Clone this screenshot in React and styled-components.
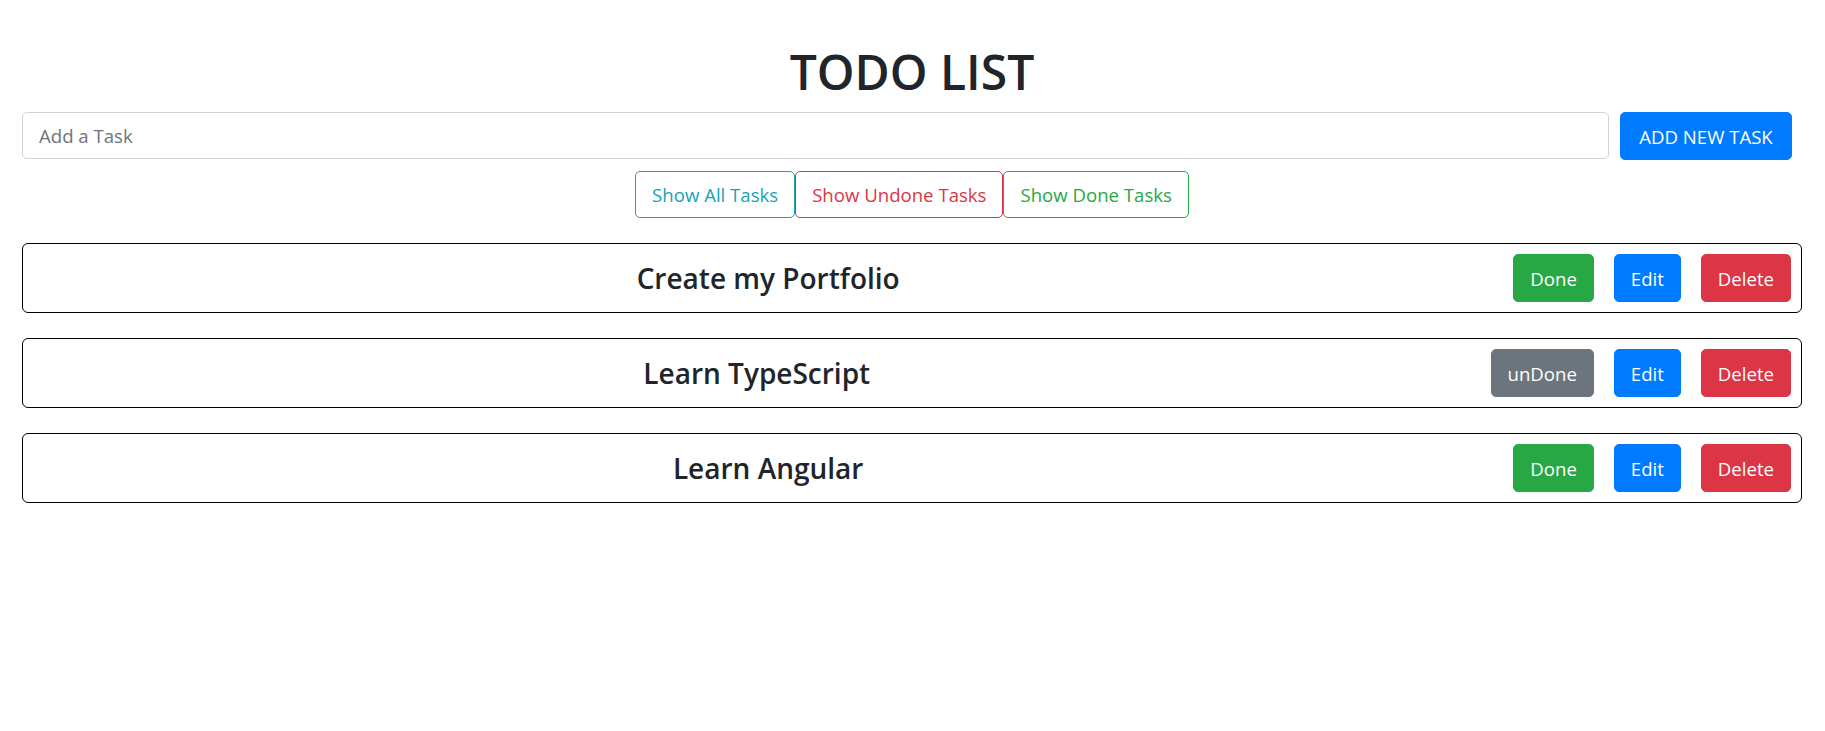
import React, { useState } from 'react';
import styled, { createGlobalStyle } from 'styled-components';

const GlobalStyle = createGlobalStyle`
  body {
    margin: 0;
    background: #fff;
    color: #212529;
    font-family: "Open Sans", "Noto Sans", sans-serif;
    font-size: 18.6px;
  }
  * { box-sizing: border-box; }
`;

const Page = styled.div`
  padding: 0 23px 0 22px;
`;

const Title = styled.h1`
  margin: 0;
  padding-top: 41px;
  height: 112px;
  font-size: 48px;
  font-weight: 600;
  line-height: 62px;
  text-align: center;
  color: #212529;
`;

const AddForm = styled.form`
  display: flex;
  gap: 11px;
  margin-right: 10px;
`;

const TaskInput = styled.input`
  flex: 1;
  height: 47px;
  padding: 0 16px;
  border: 1px solid #ced4da;
  border-radius: 5px;
  font: inherit;
  color: #495057;
  outline: none;
  &::placeholder { color: #6c757d; }
`;

const Button = styled.button`
  height: ${(p) => p.$h || 48}px;
  padding: 0 ${(p) => p.$px || 16}px;
  border: 1px solid ${(p) => p.$color};
  border-radius: 5px;
  background: ${(p) => (p.$outline ? '#fff' : p.$color)};
  color: ${(p) => (p.$outline ? p.$color : '#fff')};
  font: inherit;
  white-space: nowrap;
  cursor: pointer;
`;

const AddButton = styled(Button)`
  width: 172px;
  padding: 0;
`;

const FilterBar = styled.div`
  display: flex;
  justify-content: center;
  margin: 11px 0 25px;
`;

const TaskList = styled.ul`
  list-style: none;
  margin: 0;
  padding: 0;
  display: flex;
  flex-direction: column;
  gap: 25px;
`;

const TaskRow = styled.li`
  display: flex;
  align-items: center;
  height: 70px;
  padding: 0 10px;
  border: 1px solid #000;
  border-radius: 6px;
`;

const TaskName = styled.h4`
  flex: 1;
  margin: 0 10px 0 0;
  font-size: 28px;
  font-weight: 600;
  text-align: center;
  color: #212529;
`;

const Actions = styled.div`
  display: flex;
  gap: 20px;
`;

const colors = {
  info: '#17a2b8',
  danger: '#dc3545',
  success: '#28a745',
  primary: '#007bff',
  secondary: '#6c757d',
};

const initialTasks = [
  { id: 1, name: 'Create my Portfolio', done: false },
  { id: 2, name: 'Learn TypeScript', done: true },
  { id: 3, name: 'Learn Angular', done: false },
];

const App = () => {
  const [tasks, setTasks] = useState(initialTasks);
  const [text, setText] = useState('');

  const addTask = (e) => {
    e.preventDefault();
    if (!text.trim()) return;
    setTasks([...tasks, { id: Date.now(), name: text, done: false }]);
    setText('');
  };

  const toggle = (id) =>
    setTasks(tasks.map((t) => (t.id === id ? { ...t, done: !t.done } : t)));

  const remove = (id) => setTasks(tasks.filter((t) => t.id !== id));

  return (
    <Page>
      <GlobalStyle />
      <Title>TODO LIST</Title>
      <AddForm onSubmit={addTask}>
        <TaskInput
          placeholder="Add a Task"
          value={text}
          onChange={(e) => setText(e.target.value)}
        />
        <AddButton type="submit" $color={colors.primary}>ADD NEW TASK</AddButton>
      </AddForm>
      <FilterBar>
        <Button $outline $h={47} $px={16} $color={colors.info}>Show All Tasks</Button>
        <Button $outline $h={47} $px={16} $color={colors.danger}>Show Undone Tasks</Button>
        <Button $outline $h={47} $px={16} $color={colors.success}>Show Done Tasks</Button>
      </FilterBar>
      <TaskList>
        {tasks.map((t) => (
          <TaskRow key={t.id}>
            <TaskName>{t.name}</TaskName>
            <Actions>
              {t.done ? (
                <Button $color={colors.secondary} onClick={() => toggle(t.id)}>unDone</Button>
              ) : (
                <Button $color={colors.success} onClick={() => toggle(t.id)}>Done</Button>
              )}
              <Button $color={colors.primary}>Edit</Button>
              <Button $color={colors.danger} onClick={() => remove(t.id)}>Delete</Button>
            </Actions>
          </TaskRow>
        ))}
      </TaskList>
    </Page>
  );
};

export default App;
